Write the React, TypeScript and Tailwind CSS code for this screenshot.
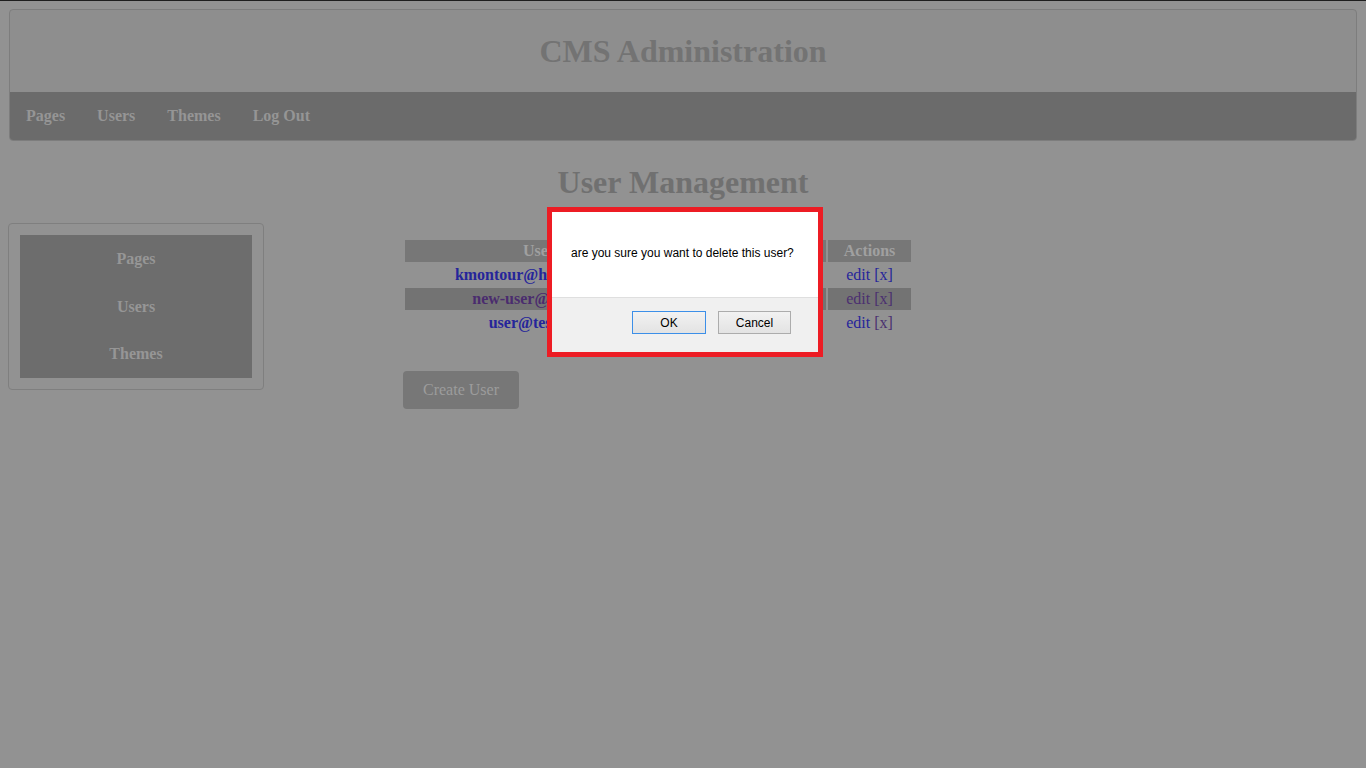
export default function App() {
  const users = [
    { email: "kmontour@hotmail.com", name: "Kevin Montour", xVisited: false },
    { email: "new-user@test.com", name: "New User", xVisited: true },
    { email: "user@test.com", name: "Test User", xVisited: true },
  ];

  return (
    <div className="relative min-h-screen bg-[#929292] font-['Liberation_Serif',serif]">
      <div className="h-px bg-[#1e1e1e]"></div>

      {/* header */}
      <div className="mx-[9px] mt-[8px] rounded-[4px] border border-[#7d7d7d] bg-[#8e8e8e] overflow-hidden">
        <div className="flex h-[82px] items-center justify-center">
          <h1 className="text-[32px] font-bold leading-[37px] text-[#737373]">
            CMS Administration
          </h1>
        </div>
        <nav className="flex h-[48px] items-center bg-[#6b6b6b] text-[16px] font-bold text-[#959595]">
          <a className="px-4">Pages</a>
          <a className="px-4">Users</a>
          <a className="px-4">Themes</a>
          <a className="px-4">Log Out</a>
        </nav>
      </div>

      <h2 className="mt-[23px] text-center text-[32px] font-bold leading-[37px] text-[#707070]">
        User Management
      </h2>

      <div className="mt-[22px] flex items-start">
        {/* sidebar */}
        <div className="ml-[8px] h-[167px] w-[256px] rounded-[4px] border border-[#7f7f7f] p-[11px]">
          <div className="flex h-full flex-col bg-[#6d6d6d] text-[16px] font-bold text-[#969696]">
            <div className="flex h-[48px] items-center justify-center">Pages</div>
            <div className="flex h-[48px] items-center justify-center">Users</div>
            <div className="flex h-[48px] items-center justify-center">Themes</div>
          </div>
        </div>

        {/* main */}
        <div className="ml-[139px] mt-[15px]">
          <table className="border-separate border-spacing-[2px] text-[16px] leading-[22px]">
            <thead>
              <tr className="font-bold text-[#a0a0a0]">
                <th className="h-[22px] w-[268px] bg-[#777777] p-0">User</th>
                <th className="h-[22px] w-[151px] bg-[#777777] p-0">Name</th>
                <th className="h-[22px] w-[83px] bg-[#777777] p-0">Actions</th>
              </tr>
            </thead>
            <tbody>
              {users.map((u, i) => (
                <tr key={i} className={i === 1 ? "bg-[#737373]" : ""}>
                  <td
                    className={
                      i === 1
                        ? "h-[22px] p-0 text-center font-bold text-[#4a2c6e]"
                        : "h-[22px] p-0 text-center font-bold text-[#25259a]"
                    }
                  >
                    {u.email}
                  </td>
                  <td className="h-[22px] p-0 text-center text-[#2a2a2a]">{u.name}</td>
                  <td className="h-[22px] p-0 text-center">
                    <span className={i === 1 ? "text-[#4b3070]" : "text-[#25259a]"}>edit</span>{" "}
                    <span className={u.xVisited ? "text-[#4b3070]" : "text-[#25259a]"}>[x]</span>
                  </td>
                </tr>
              ))}
            </tbody>
          </table>

          <button className="ml-0 mt-[35px] h-[38px] w-[116px] rounded-[4px] bg-[#777777] text-[16px] text-[#9c9c9c]">
            Create User
          </button>
        </div>
      </div>

      {/* confirm dialog */}
      <div className="absolute left-[547px] top-[207px] w-[276px] border-[5px] border-[#ed1c24] bg-white font-['Liberation_Sans',Arial,sans-serif] text-[12px] text-black">
        <div className="flex h-[85px] items-center pl-[19px] pb-[4px]">
          are you sure you want to delete this user?
        </div>
        <div className="flex h-[55px] justify-end gap-[12px] border-t border-[#dfdfdf] bg-[#f0f0f0] pr-[27px] pt-[13px]">
          <button className="h-[23px] w-[74px] border border-[#3c8fe8] bg-gradient-to-b from-[#f2f2f2] to-[#e3e3e3]">
            OK
          </button>
          <button className="h-[23px] w-[73px] border border-[#acacac] bg-gradient-to-b from-[#f2f2f2] to-[#e3e3e3]">
            Cancel
          </button>
        </div>
      </div>
    </div>
  );
}
